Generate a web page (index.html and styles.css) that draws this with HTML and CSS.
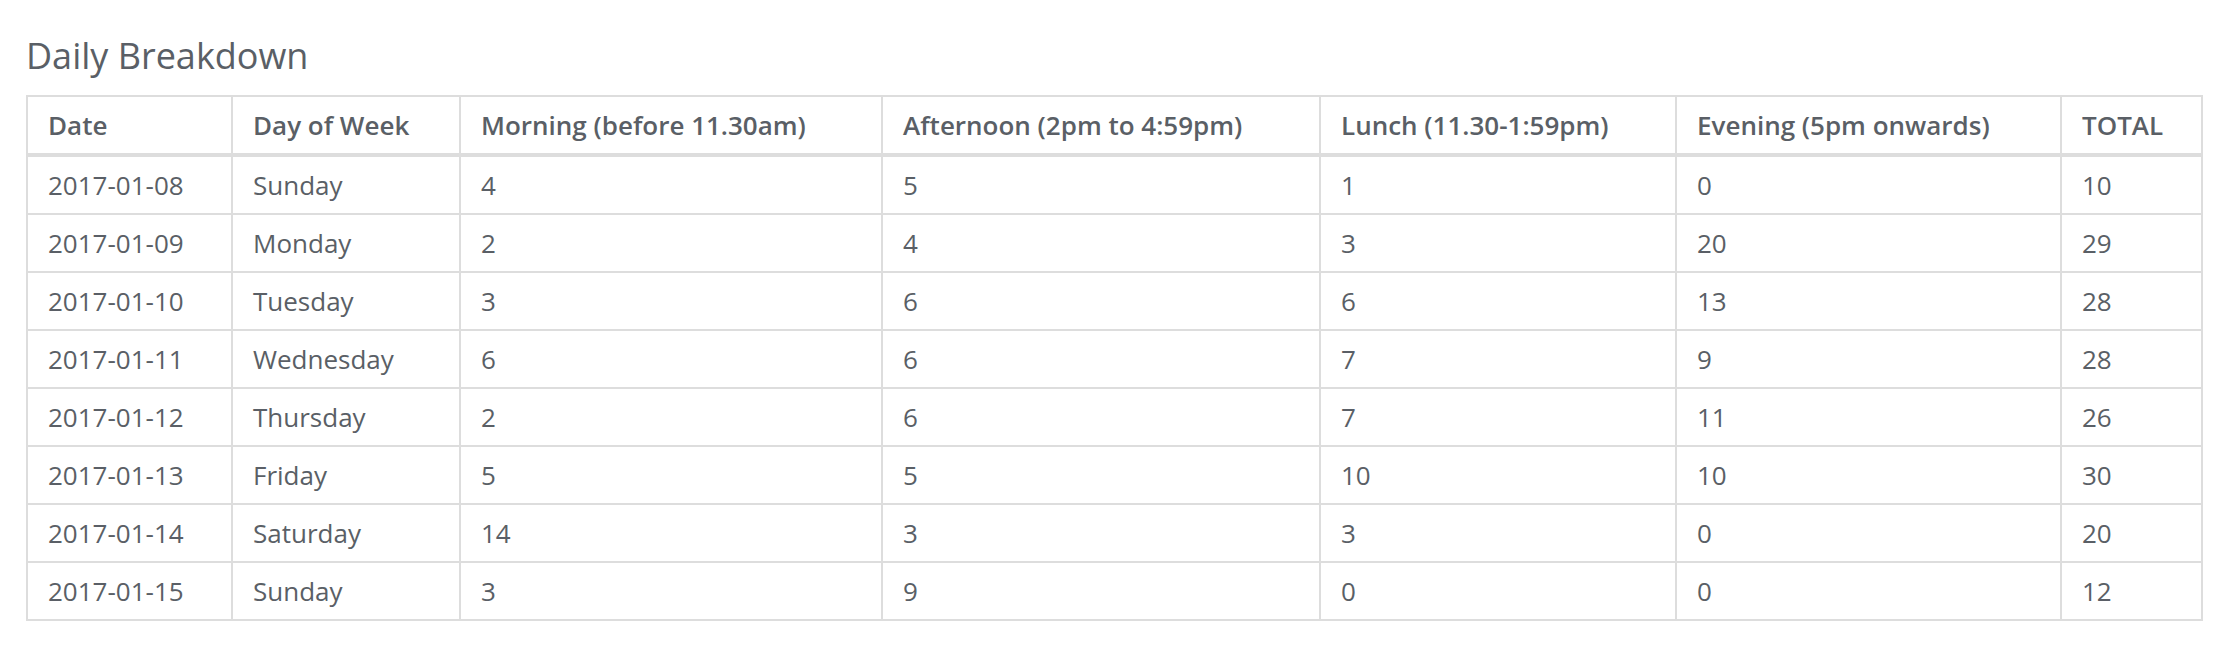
FILE: index.html
```html
<!DOCTYPE html>
<html>
<head>
<meta charset="utf-8">
<link rel="stylesheet" href="styles.css">
</head>
<body>
<div class="page">
  <h4 class="title">Daily Breakdown</h4>
  <table class="grid">
    <colgroup>
      <col class="c1"><col class="c2"><col class="c3"><col class="c4"><col class="c5"><col class="c6"><col class="c7">
    </colgroup>
    <thead>
      <tr>
        <th>Date</th>
        <th>Day of Week</th>
        <th>Morning (before 11.30am)</th>
        <th>Afternoon (2pm to 4:59pm)</th>
        <th>Lunch (11.30-1:59pm)</th>
        <th>Evening (5pm onwards)</th>
        <th>TOTAL</th>
      </tr>
    </thead>
    <tbody>
      <tr><td>2017-01-08</td><td>Sunday</td><td>4</td><td>5</td><td>1</td><td>0</td><td>10</td></tr>
      <tr><td>2017-01-09</td><td>Monday</td><td>2</td><td>4</td><td>3</td><td>20</td><td>29</td></tr>
      <tr><td>2017-01-10</td><td>Tuesday</td><td>3</td><td>6</td><td>6</td><td>13</td><td>28</td></tr>
      <tr><td>2017-01-11</td><td>Wednesday</td><td>6</td><td>6</td><td>7</td><td>9</td><td>28</td></tr>
      <tr><td>2017-01-12</td><td>Thursday</td><td>2</td><td>6</td><td>7</td><td>11</td><td>26</td></tr>
      <tr><td>2017-01-13</td><td>Friday</td><td>5</td><td>5</td><td>10</td><td>10</td><td>30</td></tr>
      <tr><td>2017-01-14</td><td>Saturday</td><td>14</td><td>3</td><td>3</td><td>0</td><td>20</td></tr>
      <tr><td>2017-01-15</td><td>Sunday</td><td>3</td><td>9</td><td>0</td><td>0</td><td>12</td></tr>
    </tbody>
  </table>
</div>
</body>
</html>
```

FILE: styles.css
```css
html, body {
  margin: 0;
  padding: 0;
  background: #ffffff;
}

.page {
  padding: 36px 29px 0 26px;
  font-family: "Open Sans", "Liberation Sans", sans-serif;
  color: #5a5f66;
}

.title {
  margin: 0 0 19px 0;
  font-size: 36px;
  line-height: 40px;
  font-weight: 400;
  color: #5a5f66;
}

.grid {
  width: 2177px;
  table-layout: fixed;
  border-collapse: separate;
  border-spacing: 0;
  border-left: 2px solid #dddddd;
  border-top: 2px solid #dddddd;
  font-size: 26px;
}

.c1 { width: 205px; }
.c2 { width: 228px; }
.c3 { width: 422px; }
.c4 { width: 438px; }
.c5 { width: 356px; }
.c6 { width: 385px; }
.c7 { width: 141px; }

.grid th,
.grid td {
  padding: 9px 18px 9px 20px;
  line-height: 38px;
  text-align: left;
  vertical-align: middle;
  border-right: 2px solid #dddddd;
  border-bottom: 2px solid #dddddd;
  white-space: nowrap;
}

.grid th {
  font-weight: 600;
  border-bottom-width: 4px;
}

.grid td {
  font-weight: 400;
}
```
